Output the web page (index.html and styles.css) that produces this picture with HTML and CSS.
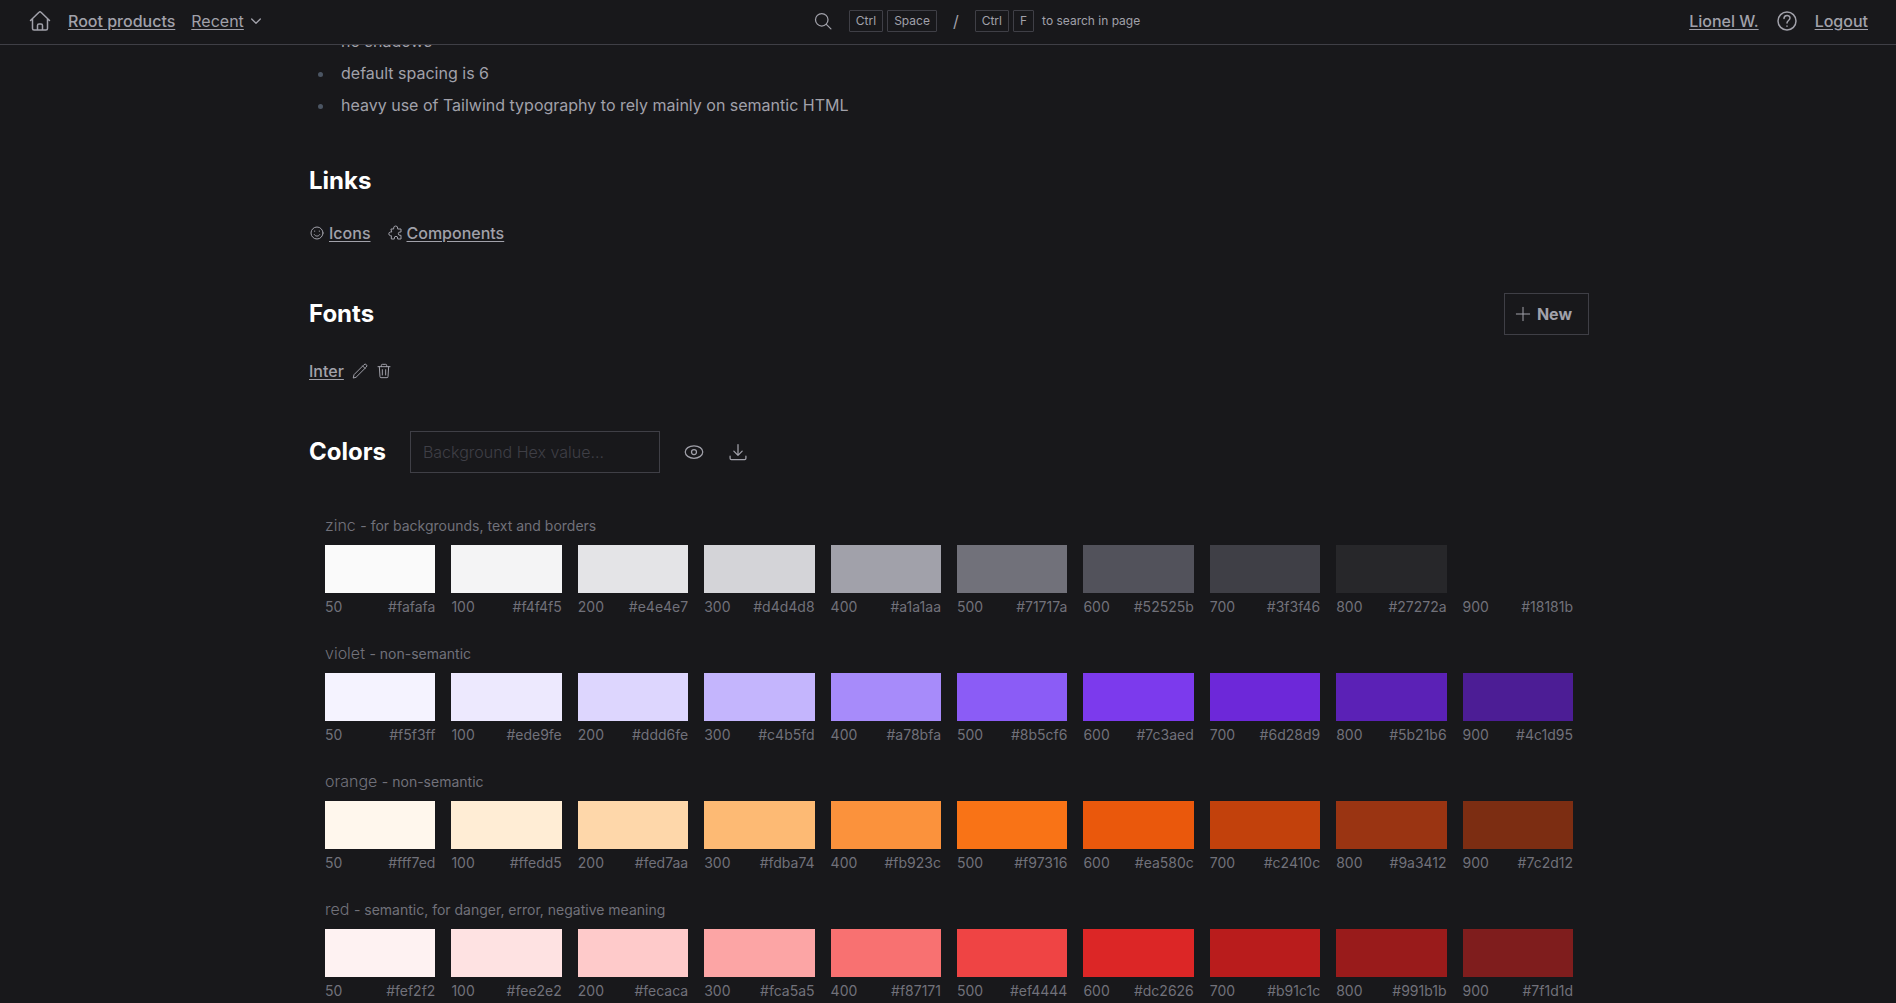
FILE: index.html
```html
<!DOCTYPE html>
<html lang="en">
<head>
    <meta charset="UTF-8">
    <meta name="viewport" content="width=device-width, initial-scale=1.0">
    <title>Design system</title>
    <link rel="stylesheet" href="styles.css">
</head>
<body>
    <header class="topbar">
        <nav class="topbar-left" aria-label="Main">
            <a href="#" class="icon-link" aria-label="Home">
                <svg class="icon icon-lg" viewBox="0 0 24 24"><path d="M2.500 11.500 11 3.200a1.400 1.400 0 0 1 2 0l8.500 8.300M4.500 10v9.500a1.500 1.500 0 0 0 1.500 1.500h12a1.500 1.500 0 0 0 1.500-1.500V10M9.500 21v-4.500a1.500 1.500 0 0 1 1.500-1.500h2a1.500 1.500 0 0 1 1.500 1.500V21"/></svg>
            </a>
            <a href="#">Root products</a>
            <a href="#" class="recent"><span>Recent</span>
                <svg class="icon icon-sm" viewBox="0 0 24 24"><path stroke-width="2" d="m5.500 9 6.500 6.500L18.500 9"/></svg>
            </a>
        </nav>
        <div class="topbar-search">
            <button type="button" class="icon-button" aria-label="Search">
                <svg class="icon" viewBox="0 0 24 24"><circle cx="10.500" cy="10.500" r="7.500"/><path d="m16 16 5.500 5.500"/></svg>
            </button>
            <div class="keys"><kbd>Ctrl</kbd><kbd>Space</kbd></div>
            <span class="slash">/</span>
            <div class="keys"><kbd>Ctrl</kbd><kbd>F</kbd><span class="keys-hint">to search in page</span></div>
        </div>
        <nav class="topbar-right" aria-label="Account">
            <a href="#">Lionel W.</a>
            <a href="#" class="icon-link" aria-label="Help">
                <svg class="icon icon-lg" viewBox="0 0 24 24"><circle cx="12" cy="12" r="9"/><path d="M9 9.500c0-4 6-4 6-.5 0 2.500-3 2.500-3 5M12 17v.2"/></svg>
            </a>
            <a href="#">Logout</a>
        </nav>
    </header>

    <main class="content">
        <ul class="rules">
            <li>no shadows</li>
            <li>default spacing is 6</li>
            <li>heavy use of Tailwind typography to rely mainly on semantic HTML</li>
        </ul>

        <h2>Links</h2>
        <div class="links">
            <span class="link-item">
                <svg class="icon icon-sm" viewBox="0 0 24 24"><circle cx="12" cy="12" r="9"/><path d="M8 14.500c1.500 3 6.500 3 8 0M8.500 9v.5M15.500 9v.5"/></svg>
                <a href="#">Icons</a>
            </span>
            <span class="link-item">
                <svg class="icon icon-sm" viewBox="0 0 24 24"><path d="M6.500 6H10V4.500a3 3 0 0 1 6 0V6h5v4.500h-1.500a2.500 2.500 0 0 0 0 5H21V21h-5v-1.500a2.500 2.500 0 0 0-5 0V21H6.500v-5H5a2.800 2.800 0 0 1 0-5.500h1.500z"/></svg>
                <a href="#">Components</a>
            </span>
        </div>

        <div class="section-head">
            <h2>Fonts</h2>
            <button type="button" class="new-button">
                <svg class="icon icon-sm" viewBox="0 0 24 24"><path d="M12 2v20M2 12h20"/></svg>
                <span>New</span>
            </button>
        </div>
        <div class="font-row">
            <a href="#">Inter</a>
            <button type="button" class="icon-button" aria-label="Edit Inter">
                <svg class="icon icon-sm" viewBox="0 0 24 24"><path d="m2 22 1-4.500L18 2.500a2.100 2.100 0 0 1 3.500 3.500L6.500 21zM16 4.500 19.500 8"/></svg>
            </button>
            <button type="button" class="icon-button" aria-label="Delete Inter">
                <svg class="icon icon-sm" viewBox="0 0 24 24"><path d="M3 5.500h18M5 5.500l1 15A1.500 1.500 0 0 0 7.500 22h9a1.500 1.500 0 0 0 1.500-1.500l1-15M8 5.500V3.500A1.500 1.500 0 0 1 9.500 2h5A1.500 1.500 0 0 1 16 3.500v2M9.500 10v8M14.500 10v8"/></svg>
            </button>
        </div>

        <form class="colors-head">
            <h2>Colors</h2>
            <input type="text" class="hex-input" placeholder="Background Hex value..." aria-label="Background Hex value">
            <button type="button" class="icon-button" aria-label="Preview background">
                <svg class="icon" viewBox="0 0 24 24"><path d="M1.500 12c0-4 4.500-7.500 10.500-7.500S22.500 8 22.500 12 18 19.500 12 19.500 1.500 16 1.500 12z"/><circle cx="12" cy="12" r="3"/></svg>
            </button>
            <button type="button" class="icon-button" aria-label="Download colors">
                <svg class="icon" viewBox="0 0 24 24"><path d="M12 3v13M7 11l5 5 5-5M2.500 17v2.500A1.500 1.500 0 0 0 4 21h16a1.500 1.500 0 0 0 1.500-1.500V17"/></svg>
            </button>
        </form>

        <div class="palettes" id="palettes"></div>
    </main>

    <script src="palettes.js"></script>
</body>
</html>
```
FILE: styles.css
```css
* {
    box-sizing: border-box;
}

body {
    margin: 0;
    height: 100vh;
    overflow: hidden;
    background-color: #18181b;
    color: #a1a1aa;
    font-family: Inter, "Liberation Sans", sans-serif;
    font-size: 16px;
    line-height: 24px;
}

a {
    color: inherit;
    font-weight: 500;
    text-underline-offset: 2px;
}

h2 {
    margin: 0;
    color: #ffffff;
    font-size: 24px;
    font-weight: 700;
    line-height: 32px;
}

button {
    font: inherit;
    color: inherit;
    background: none;
    cursor: pointer;
}

.icon {
    display: block;
    flex: none;
    width: 20px;
    height: 20px;
    fill: none;
    stroke: currentColor;
    stroke-width: 1.5;
    stroke-linecap: round;
    stroke-linejoin: round;
}

.icon-lg {
    width: 24px;
    height: 24px;
}

.icon-sm {
    width: 16px;
    height: 16px;
}

.icon-button {
    padding: 0;
    border: 0;
}

/* Top bar */
.topbar {
    position: sticky;
    top: 0;
    z-index: 1;
    display: flex;
    align-items: center;
    justify-content: space-between;
    height: 45px;
    padding: 0 28px 2px;
    background-color: #18181b;
    border-bottom: 1px solid #3f3f46;
}

.topbar-left,
.topbar-right {
    display: flex;
    align-items: center;
    gap: 16px;
}

.topbar .recent {
    display: flex;
    align-items: center;
    gap: 4px;
    font-weight: 400;
    text-decoration: none;
}

.recent span {
    text-decoration: underline;
}

.topbar-search {
    display: flex;
    align-items: center;
    gap: 16px;
}

.keys {
    display: flex;
    align-items: center;
    gap: 4px;
    font-size: 12px;
    line-height: 16px;
}

kbd {
    padding: 2px 6px;
    border: 1px solid #3f3f46;
    border-radius: 1px;
    font-family: inherit;
}

.keys-hint {
    margin-left: 4px;
}

/* Page */
.content {
    max-width: 1330px;
    margin: 0 auto;
    padding: 0 24px 0 26px;
}

.rules {
    margin: -18px 0 0;
    padding-left: 26px;
}

.rules li {
    margin-bottom: 4px;
    padding-left: 6px;
    line-height: 28px;
}

.rules li::marker {
    color: #4b5563;
}

.rules + h2 {
    margin-top: 46px;
}

.links {
    display: flex;
    gap: 16px;
    margin-top: 24px;
}

.link-item {
    display: flex;
    align-items: center;
    gap: 4px;
}

.section-head {
    display: flex;
    align-items: center;
    justify-content: space-between;
    margin-top: 48px;
}

.new-button {
    display: flex;
    align-items: center;
    gap: 6px;
    height: 42px;
    padding: 0 16px 0 10px;
    border: 1px solid #3f3f46;
    font-weight: 700;
}

.font-row {
    display: flex;
    align-items: center;
    gap: 8px;
    margin-top: 24px;
}

.colors-head {
    display: flex;
    align-items: center;
    gap: 24px;
    margin-top: 48px;
}

.hex-input {
    width: 250px;
    height: 42px;
    padding: 0 12px;
    background: none;
    border: 1px solid #3f3f46;
    color: inherit;
    font: inherit;
    font-weight: 300;
}

.hex-input::placeholder {
    color: #3f3f46;
}

/* Palettes */
.palettes {
    padding: 40px 16px 0;
    color: #71717a;
    font-weight: 300;
}

.palette {
    margin-bottom: 24px;
}

.palette-title {
    margin: 0 0 8px;
}

.palette-title small {
    font-size: 14px;
    font-weight: 400;
    line-height: 20px;
}

.swatches {
    display: grid;
    grid-template-columns: repeat(10, 1fr);
    gap: 16px;
}

.swatch-color {
    height: 48px;
}

.swatch-label {
    display: flex;
    justify-content: space-between;
    margin-top: 4px;
    font-size: 14px;
    font-weight: 400;
    line-height: 20px;
}
```
FILE: palettes.js
```js
const shades = [50, 100, 200, 300, 400, 500, 600, 700, 800, 900];

const palettes = [
    {
        name: 'zinc',
        usage: 'for backgrounds, text and borders',
        colors: ['#fafafa', '#f4f4f5', '#e4e4e7', '#d4d4d8', '#a1a1aa', '#71717a', '#52525b', '#3f3f46', '#27272a', '#18181b']
    },
    {
        name: 'violet',
        usage: 'non-semantic',
        colors: ['#f5f3ff', '#ede9fe', '#ddd6fe', '#c4b5fd', '#a78bfa', '#8b5cf6', '#7c3aed', '#6d28d9', '#5b21b6', '#4c1d95']
    },
    {
        name: 'orange',
        usage: 'non-semantic',
        colors: ['#fff7ed', '#ffedd5', '#fed7aa', '#fdba74', '#fb923c', '#f97316', '#ea580c', '#c2410c', '#9a3412', '#7c2d12']
    },
    {
        name: 'red',
        usage: 'semantic, for danger, error, negative meaning',
        colors: ['#fef2f2', '#fee2e2', '#fecaca', '#fca5a5', '#f87171', '#ef4444', '#dc2626', '#b91c1c', '#991b1b', '#7f1d1d']
    }
];

document.getElementById('palettes').innerHTML = palettes.map(palette => `
    <section class="palette">
        <p class="palette-title">${palette.name} <small>- ${palette.usage}</small></p>
        <div class="swatches">
            ${palette.colors.map((color, i) => `
                <div class="swatch">
                    <div class="swatch-color" style="background-color: ${color}"></div>
                    <div class="swatch-label"><span>${shades[i]}</span><span>${color}</span></div>
                </div>`).join('')}
        </div>
    </section>`).join('');
```
